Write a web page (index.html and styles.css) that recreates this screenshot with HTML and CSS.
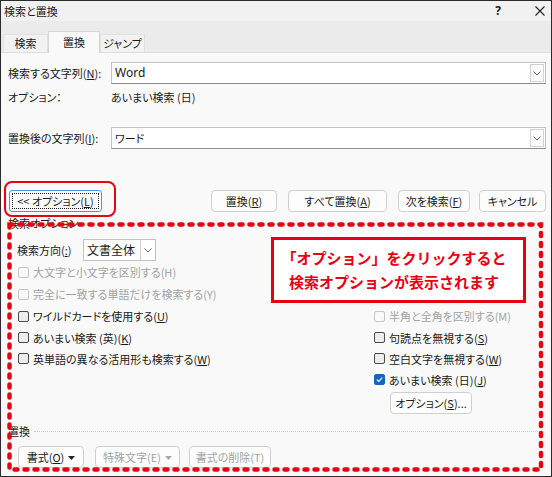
FILE: index.html
```html
<!DOCTYPE html>
<html lang="ja">
<head>
<meta charset="utf-8">
<title>検索と置換</title>
<link rel="stylesheet" href="styles.css">
</head>
<body>
<div class="dialog">
  <div class="titlebar">
    <span class="title">検索と置換</span>
    <span class="help">?</span>
    <svg class="close" width="10" height="10" viewBox="0 0 10 10"><path d="M0.5 0.5 L9.5 9.5 M9.5 0.5 L0.5 9.5" stroke="#222" stroke-width="1.1" fill="none"/></svg>
  </div>
  <div class="tabstrip">
    <div class="tab">検索</div>
    <div class="tab active">置換</div>
    <div class="tab">ジャンプ</div>
  </div>
  <div class="content">
    <div class="field">
      <span class="flabel">検索する文字列(<u>N</u>):</span>
      <div class="combo">
        <span class="val latin">Word</span>
        <span class="drop"><svg width="8" height="5" viewBox="0 0 8 5"><path d="M0.5 0.5 L4 4 L7.5 0.5" stroke="#666" fill="none" stroke-width="1"/></svg></span>
      </div>
    </div>
    <div class="info">
      <span class="flabel">オプション：</span>
      <span>あいまい検索 (日)</span>
    </div>
    <div class="field f2">
      <span class="flabel">置換後の文字列(<u>I</u>):</span>
      <div class="combo">
        <span class="val">ワード</span>
        <span class="drop"><svg width="8" height="5" viewBox="0 0 8 5"><path d="M0.5 0.5 L4 4 L7.5 0.5" stroke="#666" fill="none" stroke-width="1"/></svg></span>
      </div>
    </div>
    <div class="actions">
      <button class="btn btn-opt"><span class="focusring">&lt;&lt; オプション(<u>L</u>)</span></button>
      <button class="btn btn-rep">置換(<u>R</u>)</button>
      <button class="btn btn-all">すべて置換(<u>A</u>)</button>
      <button class="btn btn-next">次を検索(<u>F</u>)</button>
      <button class="btn btn-cancel">キャンセル</button>
    </div>
    <div class="group-head"><span>検索オプション</span><span class="gline"></span></div>
    <div class="dir-row">
      <span class="dlabel">検索方向(<u>:</u>)</span>
      <div class="select">
        <span class="sval">文書全体</span>
        <span class="sdrop"><svg width="8" height="5" viewBox="0 0 8 5"><path d="M0.5 0.5 L4 4 L7.5 0.5" stroke="#666" fill="none" stroke-width="1"/></svg></span>
      </div>
    </div>
    <div class="checks">
      <div class="col col-left">
        <div class="chk disabled h22"><span class="box"></span>大文字と小文字を区別する(H)</div>
        <div class="chk disabled h22"><span class="box"></span>完全に一致する単語だけを検索する(Y)</div>
        <div class="chk h22"><span class="box"></span>ワイルドカードを使用する(<u>U</u>)</div>
        <div class="chk h21"><span class="box"></span>あいまい検索 (英)(<u>K</u>)</div>
        <div class="chk h21"><span class="box"></span>英単語の異なる活用形も検索する(<u>W</u>)</div>
      </div>
      <div class="col col-right">
        <div class="chk disabled h22"><span class="box"></span>半角と全角を区別する(M)</div>
        <div class="chk h21"><span class="box"></span>句読点を無視する(<u>S</u>)</div>
        <div class="chk h21"><span class="box"></span>空白文字を無視する(<u>W</u>)</div>
        <div class="chk h21"><span class="box checked"><svg width="9" height="9" viewBox="0 0 9 9"><path d="M1.8 4.6 L3.7 6.4 L7.3 2.6" stroke="#fff" stroke-width="1.2" fill="none"/></svg></span>あいまい検索 (日)(<u>J</u>)</div>
        <button class="btn btn-sub">オプション(<u>S</u>)...</button>
      </div>
    </div>
    <div class="group-head g2"><span>置換</span><span class="gline"></span></div>
    <div class="bottom-btns">
      <button class="btn btn-fmt">書式(<u>O</u>)<svg class="tri" width="7" height="4" viewBox="0 0 7 4"><path d="M0 0 L7 0 L3.5 4 Z" fill="#222"/></svg></button>
      <button class="btn btn-spec dis">特殊文字(E)<svg class="tri" width="7" height="4" viewBox="0 0 7 4"><path d="M0 0 L7 0 L3.5 4 Z" fill="#a8a8a8"/></svg></button>
      <button class="btn btn-clr dis">書式の削除(T)</button>
    </div>
  </div>
  <svg class="annot" width="552" height="477" viewBox="0 0 552 477">
    <rect x="5" y="182" width="110" height="34" rx="7" ry="7" fill="none" stroke="#e60012" stroke-width="2"/>
    <rect x="9.5" y="224.5" width="531.5" height="245" fill="none" stroke="#e60012" stroke-width="4.5" stroke-dasharray="3 7" stroke-linecap="round"/>
  </svg>
  <div class="callout">「オプション」をクリックすると<br>検索オプションが表示されます</div>
</div>
</body>
</html>
```

FILE: styles.css
```css
body {
  margin: 0;
  background: #fff;
  font-family: "Noto Sans CJK JP", "Noto Sans", sans-serif;
  font-size: 11px;
  color: #1a1a1a;
  font-feature-settings: "palt";
}

.dialog {
  width: 552px;
  height: 477px;
  box-sizing: border-box;
  border: 1px solid #2b2b2b;
  background: #f9f9f9;
  position: relative;
  overflow: hidden;
}

.titlebar {
  height: 20px;
  display: flex;
  align-items: center;
  padding: 0 6px 0 3px;
  background: #f1f1f1;
}

.title {
  line-height: 18px;
}

.help {
  margin-left: auto;
  width: 12px;
  text-align: center;
  font-family: "Noto Sans", sans-serif;
  font-weight: 700;
  font-size: 12px;
  line-height: 18px;
}

.close {
  margin-left: 31px;
  display: block;
}

.tabstrip {
  height: 32px;
  box-sizing: border-box;
  display: flex;
  align-items: flex-end;
  padding-left: 2px;
  background: #ebebeb;
  border-bottom: 1px solid #dddddd;
}

.tab {
  width: 45px;
  height: 18px;
  box-sizing: border-box;
  text-align: center;
  line-height: 17px;
  background: #f2f2f2;
  border: 1px solid #e0e0e0;
  border-bottom: none;
}

.tab.active {
  width: 52px;
  height: 22px;
  line-height: 20px;
  margin-bottom: -1px;
  background: #f9f9f9;
  border-color: #d6d6d6;
  position: relative;
  z-index: 1;
}

.content {
  padding: 0 5px 0 7px;
}

.field {
  display: flex;
  align-items: center;
  height: 22px;
  margin-top: 9px;
}

.field.f2 {
  margin-top: 20px;
}

.flabel {
  width: 103px;
  flex: none;
  line-height: 16px;
}

.combo {
  flex: 1;
  height: 22px;
  box-sizing: border-box;
  display: flex;
  align-items: center;
  background: #fff;
  border: 1px solid #c2c2c2;
  border-bottom-color: #8d8d8d;
}

.val {
  flex: 1;
  padding-left: 3px;
  font-size: 11px;
  line-height: 16px;
}

.val.latin {
  font-family: "Noto Sans", sans-serif;
  font-size: 12px;
}

.drop {
  width: 14px;
  height: 18px;
  margin-right: 1px;
  box-sizing: border-box;
  border: 1px solid #d2d2d2;
  background: #fbfbfb;
  display: flex;
  align-items: center;
  justify-content: center;
}

.drop svg, .sdrop svg {
  display: block;
}

.info {
  display: flex;
  align-items: center;
  height: 20px;
  margin-top: 3px;
  line-height: 16px;
}

.actions {
  display: flex;
  height: 22px;
  margin-top: 41px;
}

.btn {
  height: 22px;
  box-sizing: border-box;
  border: 1px solid #d0d0d0;
  border-radius: 4px;
  background: #fdfdfd;
  font-family: inherit;
  font-size: 11px;
  font-feature-settings: "palt";
  color: #1a1a1a;
  padding: 0;
  line-height: 18px;
  text-align: center;
}

.btn-opt {
  width: 93px;
  margin-left: 1px;
  padding: 2px;
  border-color: #4c96e0;
  border-radius: 3px;
}

.focusring {
  display: block;
  height: 100%;
  box-sizing: border-box;
  border: 1px dotted #222;
  line-height: 14px;
}

.btn-rep { width: 66px; margin-left: auto; }
.btn-all { width: 99px; margin-left: 11px; }
.btn-next { width: 72px; margin-left: 11px; }
.btn-cancel { width: 67px; margin-left: 9px; }

.group-head {
  display: flex;
  align-items: center;
  height: 18px;
  margin-top: 2px;
  line-height: 18px;
}

.group-head.g2 {
  margin-top: 8px;
}

.gline {
  flex: 1;
  margin: 0 8px 0 4px;
  border-top: 1px dotted #cfcfcf;
}

.dir-row {
  display: flex;
  align-items: center;
  height: 22px;
  margin-top: 7px;
  padding-left: 9px;
}

.dlabel {
  width: 66px;
  line-height: 16px;
}

.select {
  width: 73px;
  height: 22px;
  box-sizing: border-box;
  display: flex;
  align-items: center;
  background: #fff;
  border: 1px solid #c2c2c2;
}

.sval {
  flex: 1;
  padding-left: 3px;
  font-size: 12px;
  line-height: 16px;
}

.sdrop {
  width: 14px;
  height: 100%;
  border-left: 1px solid #d2d2d2;
  display: flex;
  align-items: center;
  justify-content: center;
}

.checks {
  display: flex;
  padding-left: 10px;
}

.col {
  display: flex;
  flex-direction: column;
}

.col-left {
  width: 356px;
}

.col-right {
  padding-top: 44px;
}

.chk {
  display: flex;
  align-items: center;
  line-height: 16px;
  white-space: nowrap;
}

.h22 { height: 22px; }
.h21 { height: 21px; }

.box {
  width: 11px;
  height: 11px;
  box-sizing: border-box;
  margin-right: 4px;
  border: 1px solid #4a4a4a;
  border-radius: 2px;
  background: #ededed;
  display: flex;
  align-items: center;
  justify-content: center;
}

.box.checked {
  background: #1466c0;
  border-color: #1466c0;
}

.box svg {
  display: block;
}

.chk.disabled {
  color: #a2a2a2;
}

.chk.disabled .box {
  border-color: #c6c6c6;
  background: #f9f9f9;
}

.btn-sub {
  width: 82px;
  margin-top: 2px;
  margin-left: 16px;
}

.bottom-btns {
  display: flex;
  margin-top: 6px;
  padding-left: 10px;
}

.btn-fmt { width: 66px; }
.btn-spec { width: 85px; margin-left: 11px; }
.btn-clr { width: 82px; margin-left: 9px; }

.btn.dis {
  color: #a2a2a2;
}

.tri {
  margin-left: 4px;
  vertical-align: middle;
  position: relative;
  top: -1px;
}

.annot {
  position: absolute;
  left: -1px;
  top: -1px;
  pointer-events: none;
}

.callout {
  position: absolute;
  left: 270px;
  top: 236px;
  width: 255px;
  height: 66px;
  box-sizing: border-box;
  border: 3px solid #e60012;
  background: #fff;
  color: #e60012;
  font-weight: 700;
  font-size: 15px;
  line-height: 24px;
  font-feature-settings: normal;
  text-align: center;
  padding: 6px 9px 0 0;
}
```
